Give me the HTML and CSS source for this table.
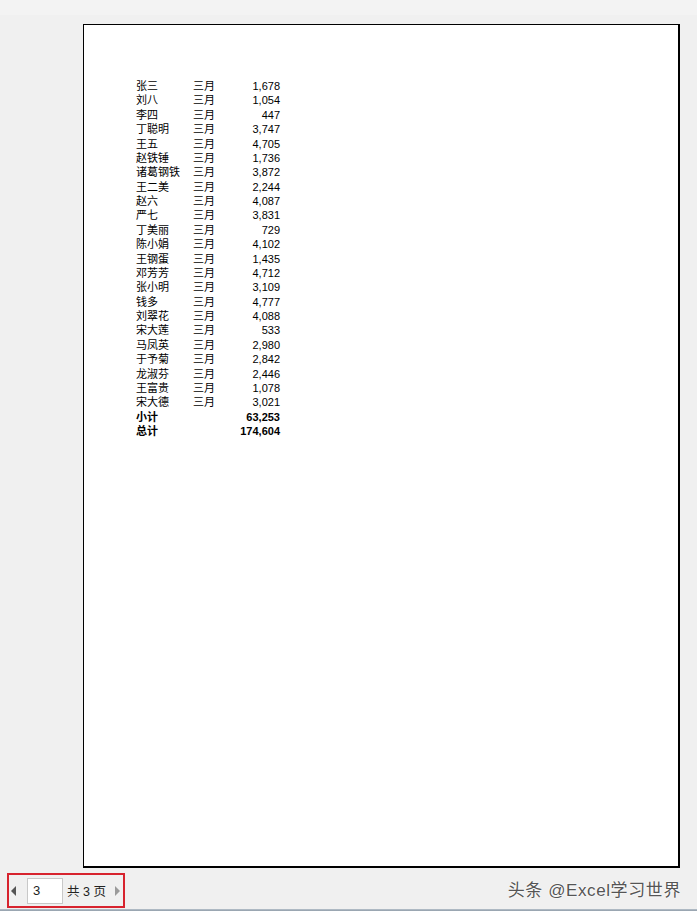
FILE: index.html
```html
<!DOCTYPE html>
<html lang="zh">
<head>
<meta charset="utf-8">
<link rel="stylesheet" href="styles.css">
</head>
<body>
<div class="app">
  <div class="topbar"></div>
  <div class="viewport">
    <div class="page">
      <div class="sheet">
        <div class="row"><span class="name">张三</span><span class="month">三月</span><span class="num">1,678</span></div>
        <div class="row"><span class="name">刘八</span><span class="month">三月</span><span class="num">1,054</span></div>
        <div class="row"><span class="name">李四</span><span class="month">三月</span><span class="num">447</span></div>
        <div class="row"><span class="name">丁聪明</span><span class="month">三月</span><span class="num">3,747</span></div>
        <div class="row"><span class="name">王五</span><span class="month">三月</span><span class="num">4,705</span></div>
        <div class="row"><span class="name">赵铁锤</span><span class="month">三月</span><span class="num">1,736</span></div>
        <div class="row"><span class="name">诸葛钢铁</span><span class="month">三月</span><span class="num">3,872</span></div>
        <div class="row"><span class="name">王二美</span><span class="month">三月</span><span class="num">2,244</span></div>
        <div class="row"><span class="name">赵六</span><span class="month">三月</span><span class="num">4,087</span></div>
        <div class="row"><span class="name">严七</span><span class="month">三月</span><span class="num">3,831</span></div>
        <div class="row"><span class="name">丁美丽</span><span class="month">三月</span><span class="num">729</span></div>
        <div class="row"><span class="name">陈小娟</span><span class="month">三月</span><span class="num">4,102</span></div>
        <div class="row"><span class="name">王钢蛋</span><span class="month">三月</span><span class="num">1,435</span></div>
        <div class="row"><span class="name">邓芳芳</span><span class="month">三月</span><span class="num">4,712</span></div>
        <div class="row"><span class="name">张小明</span><span class="month">三月</span><span class="num">3,109</span></div>
        <div class="row"><span class="name">钱多</span><span class="month">三月</span><span class="num">4,777</span></div>
        <div class="row"><span class="name">刘翠花</span><span class="month">三月</span><span class="num">4,088</span></div>
        <div class="row"><span class="name">宋大莲</span><span class="month">三月</span><span class="num">533</span></div>
        <div class="row"><span class="name">马凤英</span><span class="month">三月</span><span class="num">2,980</span></div>
        <div class="row"><span class="name">于予菊</span><span class="month">三月</span><span class="num">2,842</span></div>
        <div class="row"><span class="name">龙淑芬</span><span class="month">三月</span><span class="num">2,446</span></div>
        <div class="row"><span class="name">王富贵</span><span class="month">三月</span><span class="num">1,078</span></div>
        <div class="row"><span class="name">宋大德</span><span class="month">三月</span><span class="num">3,021</span></div>
        <div class="row bold"><span class="name">小计</span><span class="month"></span><span class="num">63,253</span></div>
        <div class="row bold"><span class="name">总计</span><span class="month"></span><span class="num">174,604</span></div>
      </div>
    </div>
  </div>
  <div class="footer">
    <div class="pager">
      <svg class="arrow" width="6" height="10" viewBox="0 0 6 10"><polygon points="5,0 5,10 0,5" fill="#555"/></svg>
      <div class="pagebox">3</div>
      <span class="total">共 3 页</span>
      <svg class="arrow" width="6" height="10" viewBox="0 0 6 10"><polygon points="0,0 0,10 5,5" fill="#9a9a9a"/></svg>
    </div>
    <div class="watermark">头条 @Excel学习世界</div>
  </div>
  <div class="bottomline"></div>
</div>
</body>
</html>
```
FILE: styles.css
```css
html, body {
  margin: 0;
  padding: 0;
}
body {
  font-family: "Liberation Sans", "Noto Sans CJK SC", sans-serif;
  background: #f0f0f0;
}
.app {
  width: 697px;
  height: 911px;
  display: flex;
  flex-direction: column;
  background: #f0f0f0;
  overflow: hidden;
}
.topbar {
  height: 15px;
  background: #f3f3f3;
  flex: none;
}
.viewport {
  flex: none;
  padding: 9px 0 0 83px;
}
.page {
  box-sizing: border-box;
  width: 597px;
  height: 844px;
  background: #fff;
  border-top: 1px solid #000;
  border-left: 1px solid #000;
  border-right: 2px solid #000;
  border-bottom: 2px solid #000;
  padding: 54px 0 0 52px;
}
.sheet {
  display: flex;
  flex-direction: column;
  width: 145px;
}
.row {
  display: grid;
  grid-template-columns: 57px 40px 47px;
  height: 14.375px;
  line-height: 14.375px;
  font-size: 11px;
  color: #000;
  white-space: nowrap;
}
.num {
  text-align: right;
}
.bold {
  font-weight: bold;
}
.footer {
  flex: none;
  height: 41px;
  display: flex;
  justify-content: space-between;
  align-items: flex-start;
  padding: 5px 16px 0 7px;
  box-sizing: border-box;
}
.pager {
  box-sizing: border-box;
  width: 118px;
  height: 35px;
  border: 2px solid #d7232e;
  display: flex;
  align-items: center;
  padding-left: 2px;
  font-size: 12.5px;
  color: #222;
}
.arrow {
  flex: none;
}
.pagebox {
  box-sizing: border-box;
  width: 36px;
  height: 26px;
  margin-left: 10px;
  background: #fff;
  border: 1px solid #c8c8c8;
  line-height: 24px;
  padding-left: 5px;
  font-size: 13px;
  color: #222;
}
.total {
  margin-left: 4px;
  margin-right: 9px;
  white-space: nowrap;
}
.watermark {
  margin-top: 3px;
  font-size: 17px;
  color: #555;
  letter-spacing: 0.6px;
  text-shadow: 0 0 2px #fff, 0 0 2px #fff;
  white-space: nowrap;
}
.bottomline {
  flex: none;
  height: 3px;
  background: linear-gradient(#b8c2cc, #7d8b98);
}
```
